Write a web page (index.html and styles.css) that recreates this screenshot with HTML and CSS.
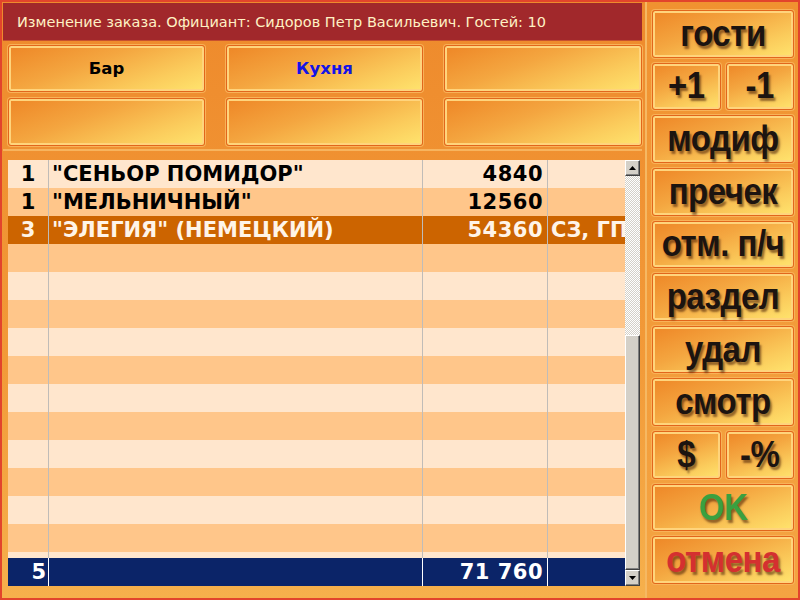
FILE: index.html
```html
<!DOCTYPE html>
<html lang="ru">
<head>
<meta charset="utf-8">
<title>Изменение заказа</title>
<link rel="stylesheet" href="styles.css">
</head>
<body>
<div class="app">
  <div class="main">
    <div class="title">Изменение заказа. Официант: Сидоров Петр Васильевич. Гостей: 10</div>
    <div class="tabs">
      <div class="btn tab">Бар</div>
      <div class="btn tab tab-blue">Кухня</div>
      <div class="btn tab"></div>
      <div class="btn tab"></div>
      <div class="btn tab"></div>
      <div class="btn tab"></div>
    </div>
    <div class="table">
      <div class="grid">
        <div class="rows">
          <div class="row light"><div class="c1">1</div><div class="c2">"СЕНЬОР ПОМИДОР"</div><div class="c3">4840</div><div class="c4"></div></div>
          <div class="row dark"><div class="c1">1</div><div class="c2">"МЕЛЬНИЧНЫЙ"</div><div class="c3">12560</div><div class="c4"></div></div>
          <div class="row sel"><div class="c1">3</div><div class="c2">"ЭЛЕГИЯ" (НЕМЕЦКИЙ)</div><div class="c3">54360</div><div class="c4">СЗ, ГП</div></div>
          <div class="row dark"><div class="c1"></div><div class="c2"></div><div class="c3"></div><div class="c4"></div></div>
          <div class="row light"><div class="c1"></div><div class="c2"></div><div class="c3"></div><div class="c4"></div></div>
          <div class="row dark"><div class="c1"></div><div class="c2"></div><div class="c3"></div><div class="c4"></div></div>
          <div class="row light"><div class="c1"></div><div class="c2"></div><div class="c3"></div><div class="c4"></div></div>
          <div class="row dark"><div class="c1"></div><div class="c2"></div><div class="c3"></div><div class="c4"></div></div>
          <div class="row light"><div class="c1"></div><div class="c2"></div><div class="c3"></div><div class="c4"></div></div>
          <div class="row dark"><div class="c1"></div><div class="c2"></div><div class="c3"></div><div class="c4"></div></div>
          <div class="row light"><div class="c1"></div><div class="c2"></div><div class="c3"></div><div class="c4"></div></div>
          <div class="row dark"><div class="c1"></div><div class="c2"></div><div class="c3"></div><div class="c4"></div></div>
          <div class="row light"><div class="c1"></div><div class="c2"></div><div class="c3"></div><div class="c4"></div></div>
          <div class="row dark"><div class="c1"></div><div class="c2"></div><div class="c3"></div><div class="c4"></div></div>
          <div class="row light"><div class="c1"></div><div class="c2"></div><div class="c3"></div><div class="c4"></div></div>
        </div>
        <div class="row total"><div class="c1 tr">5</div><div class="c2"></div><div class="c3">71 760</div><div class="c4"></div></div>
      </div>
      <div class="scroll">
        <div class="sbtn"><svg width="7" height="4" viewBox="0 0 7 4"><path d="M3.5 0 L7 4 L0 4 Z" fill="#000"/></svg></div>
        <div class="track"></div>
        <div class="thumb"></div>
        <div class="sbtn"><svg width="7" height="4" viewBox="0 0 7 4"><path d="M0 0 L7 0 L3.5 4 Z" fill="#000"/></svg></div>
      </div>
    </div>
  </div>
  <div class="side">
    <div class="btn big"><span>гости</span></div>
    <div class="pair"><div class="btn big"><span>+1</span></div><div class="btn big"><span>-1</span></div></div>
    <div class="btn big"><span>модиф</span></div>
    <div class="btn big"><span>пречек</span></div>
    <div class="btn big"><span>отм. п/ч</span></div>
    <div class="btn big"><span>раздел</span></div>
    <div class="btn big"><span>удал</span></div>
    <div class="btn big"><span>смотр</span></div>
    <div class="pair"><div class="btn big"><span>$</span></div><div class="btn big"><span>-%</span></div></div>
    <div class="btn big ok"><span>OK</span></div>
    <div class="btn big cancel"><span>отмена</span></div>
  </div>
</div>
</body>
</html>
```
FILE: styles.css
```css
* { box-sizing: border-box; }
html, body { margin: 0; padding: 0; }
body { width: 800px; height: 600px; overflow: hidden; font-family: "DejaVu Sans", Verdana, sans-serif; }

.app {
  display: flex;
  width: 800px;
  height: 600px;
  border: 2px solid #e2442c;
  background: linear-gradient(to bottom, #ee8a2c 0%, #f29a38 60%, #f6b04c 100%);
}

.main {
  width: 645px;
  padding: 1px 3px 0 1px;
  border-right: 2px solid #f6b862;
  display: flex;
  flex-direction: column;
}

.title {
  height: 38px;
  background: #a1282b;
  color: #fff2c4;
  font-size: 14.5px;
  line-height: 38px;
  padding-left: 14px;
  border-bottom: 1px solid #c8502e;
  white-space: nowrap;
}

.tabs {
  display: grid;
  grid-template-columns: 197px 197px 198px;
  grid-template-rows: 47px 48px;
  column-gap: 21px;
  row-gap: 6px;
  padding: 4px 0 0 5px;
  height: 110px;
  border-bottom: 2px solid #f7b45e;
}

.btn {
  border: 1px solid #e2661c;
  border-radius: 3px;
  box-shadow: 0 0 0 1px #f8b258, inset 0 0 0 2px #ffd47c;
  background: linear-gradient(160deg, #ee8626 0%, #f4a640 40%, #fbcc5c 75%, #ffe46e 100%);
  display: flex;
  align-items: center;
  justify-content: center;
}

.tab {
  font-family: "DejaVu Sans", Verdana, sans-serif;
  font-weight: bold;
  font-size: 16.5px;
  color: #000;
}
.tab-blue { color: #1414e6; }

.table {
  margin: 9px 0 0 5px;
  width: 632px;
  height: 426px;
  display: flex;
}

.grid {
  width: 617px;
  display: flex;
  flex-direction: column;
}

.rows {
  height: 398px;
  overflow: hidden;
}

.row {
  display: flex;
  height: 28px;
  font-family: "DejaVu Sans", Verdana, sans-serif;
  font-weight: bold;
  font-size: 21px;
  line-height: 28px;
  color: #000;
  white-space: nowrap;
}
.row > div { overflow: hidden; }
.light { background: #ffe6cd; }
.dark { background: #ffc68a; }
.sel { background: #cc6400; color: #fff4e8; }
.total { background: #0b2468; color: #fff; }

.c1 { width: 41px; text-align: center; border-right: 1px solid #c0bcb8; }
.c2 { width: 374px; padding-left: 3px; border-right: 1px solid #c0bcb8; }
.c3 { width: 125px; text-align: right; padding-right: 4px; border-right: 1px solid #c0bcb8; letter-spacing: 0.5px; }
.c4 { width: 77px; padding-left: 3px; }
.total .c1, .total .c2, .total .c3 { border-right-color: #ffffff; }
.total .tr { text-align: right; padding-right: 2px; }

.scroll {
  width: 15px;
  display: flex;
  flex-direction: column;
}
.sbtn {
  height: 16px;
  background: #d4d0c8;
  border: 1px solid;
  border-color: #ffffff #404040 #404040 #ffffff;
  box-shadow: inset -1px -1px 0 #808080;
  display: flex;
  align-items: center;
  justify-content: center;
}
.track {
  height: 159px;
  background: repeating-conic-gradient(#ffffff 0 25%, #d4d0c8 0 50%) 0 0 / 2px 2px;
}
.thumb {
  flex: 1;
  background: #d4d0c8;
  border: 1px solid;
  border-color: #ffffff #404040 #404040 #ffffff;
  box-shadow: inset -1px -1px 0 #808080;
}

.side {
  flex: 1;
  padding: 8px 4px 14px 5px;
  display: grid;
  grid-template-rows: repeat(11, 1fr);
  row-gap: 5px;
  background: linear-gradient(to bottom, #f09230, #f4a442);
}

.pair {
  display: grid;
  grid-template-columns: 1fr 1fr;
  column-gap: 5px;
}

.big {
  font-family: "Liberation Sans", Arial, sans-serif;
  font-weight: bold;
  font-size: 33px;
  color: #1c1410;
  text-shadow: 2px 2px 2px rgba(60, 20, 0, 0.55);
  white-space: nowrap;
  letter-spacing: -0.5px;
}
.big span { display: inline-block; transform: scaleY(1.12); }
.ok { color: #3aa040; }
.cancel { color: #d43030; }
```
